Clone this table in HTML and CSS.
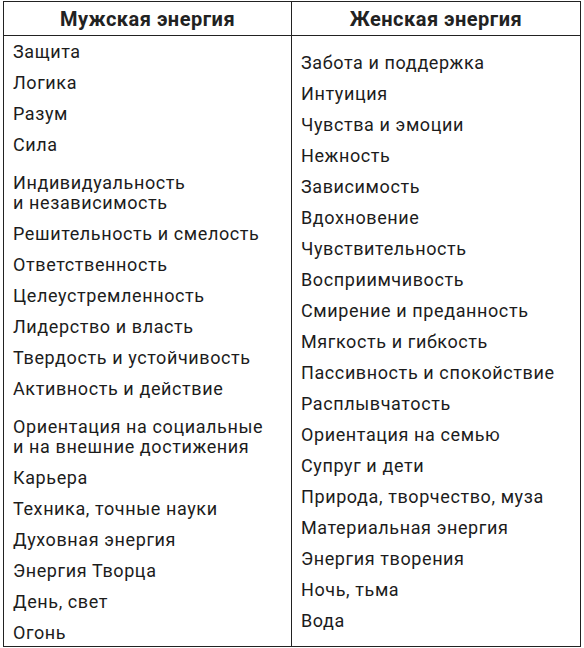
FILE: index.html
```html
<!DOCTYPE html>
<html lang="ru">
<head>
<meta charset="utf-8">
<title>Энергии</title>
<link rel="stylesheet" href="styles.css">
</head>
<body>
<div class="table">
  <div class="head head-left">Мужская энергия</div>
  <div class="head">Женская энергия</div>
  <ul class="col col-left">
    <li>Защита</li>
    <li>Логика</li>
    <li>Разум</li>
    <li>Сила</li>
    <li class="two">Индивидуальность<br>и независимость</li>
    <li>Решительность и смелость</li>
    <li>Ответственность</li>
    <li>Целеустремленность</li>
    <li>Лидерство и власть</li>
    <li>Твердость и устойчивость</li>
    <li>Активность и действие</li>
    <li class="two">Ориентация на социальные<br>и на внешние достижения</li>
    <li>Карьера</li>
    <li>Техника, точные науки</li>
    <li>Духовная энергия</li>
    <li>Энергия Творца</li>
    <li>День, свет</li>
    <li>Огонь</li>
  </ul>
  <ul class="col col-right">
    <li>Забота и поддержка</li>
    <li>Интуиция</li>
    <li>Чувства и эмоции</li>
    <li>Нежность</li>
    <li>Зависимость</li>
    <li>Вдохновение</li>
    <li>Чувствительность</li>
    <li>Восприимчивость</li>
    <li>Смирение и преданность</li>
    <li>Мягкость и гибкость</li>
    <li>Пассивность и спокойствие</li>
    <li>Расплывчатость</li>
    <li>Ориентация на семью</li>
    <li>Супруг и дети</li>
    <li>Природа, творчество, муза</li>
    <li>Материальная энергия</li>
    <li>Энергия творения</li>
    <li>Ночь, тьма</li>
    <li>Вода</li>
  </ul>
</div>
</body>
</html>
```

FILE: styles.css
```css
html, body {
  margin: 0;
  padding: 0;
  background: #fff;
}

body {
  font-family: Roboto, "Liberation Sans", sans-serif;
  color: #1c1c1c;
}

.table {
  margin: 1px 0 0 3px;
  width: 578px;
  height: 646px;
  box-sizing: border-box;
  border: 1px solid #222;
  display: grid;
  grid-template-columns: 288px 1fr;
  grid-template-rows: 34px 1fr;
  overflow: hidden;
}

.head {
  border-bottom: 1px solid #222;
  display: flex;
  align-items: center;
  justify-content: center;
  font-weight: 700;
  font-size: 20px;
  letter-spacing: 0.5px;
  color: #222;
}

.head-left,
.col-left {
  border-right: 1px solid #222;
}

.col {
  list-style: none;
  margin: 0;
  padding: 0 0 0 9px;
  font-size: 18px;
  letter-spacing: 0.6px;
}

.col-right {
  padding-top: 11px;
}

.col li {
  padding: 5.5px 0;
  line-height: 20px;
}

.col li.two {
  margin-top: 7px;
}
```
